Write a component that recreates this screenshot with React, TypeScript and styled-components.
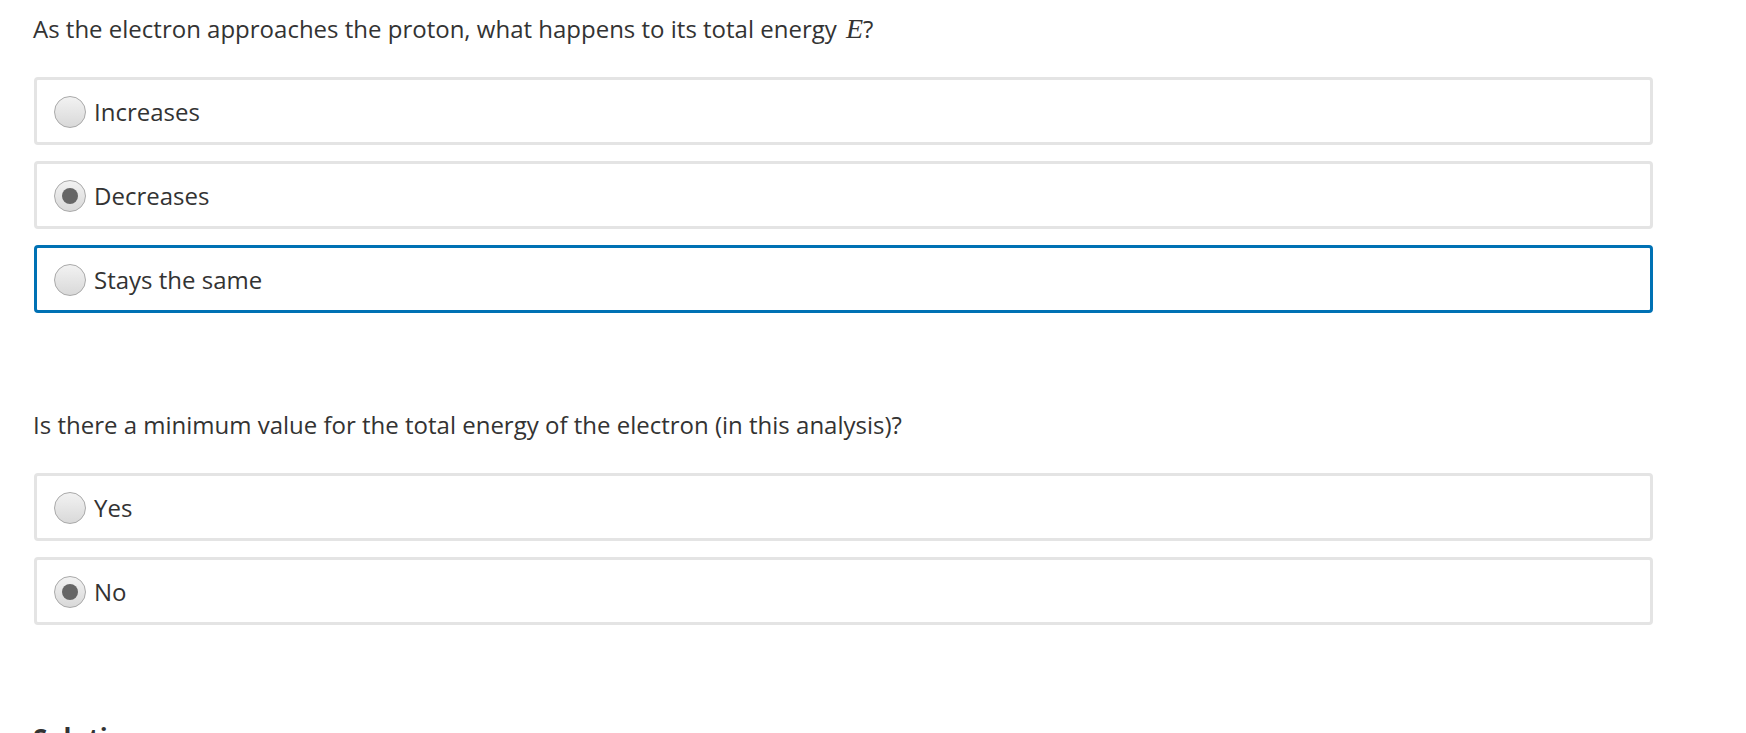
import React from "react";
import styled, { createGlobalStyle } from "styled-components";

const Global = createGlobalStyle`
  html, body { margin: 0; padding: 0; background: #fff; }
  body { font-family: "Open Sans", "Noto Sans", sans-serif; color: #333; }
`;

const Page = styled.div`
  padding: 12px 0 0 34px;
  width: 1653px;
  height: 733px;
  overflow: hidden;
  box-sizing: border-box;
`;

const Question = styled.p<{ $top: number }>`
  margin: ${(p) => p.$top}px 0 0 -1px;
  font-size: 24px;
  line-height: 34px;
  color: #333;
`;

const Math = styled.span`
  font-family: "Liberation Serif", "DejaVu Serif", serif;
  font-style: italic;
  font-size: 28px;
  margin-left: 3px;
`;

const Options = styled.div`
  margin-top: 31px;
  display: flex;
  flex-direction: column;
  gap: 16px;
`;

const Option = styled.label<{ $focused?: boolean }>`
  box-sizing: border-box;
  height: 68px;
  border: 3px solid ${(p) => (p.$focused ? "#0071b4" : "#e4e4e4")};
  border-radius: 4px;
  display: flex;
  align-items: center;
  padding: 0 0 0 17px;
  gap: 8px;
  font-size: 24px;
  color: #333;
`;

const Radio = styled.span<{ $checked?: boolean }>`
  box-sizing: border-box;
  width: 32px;
  height: 32px;
  border-radius: 50%;
  border: 1px solid #a9a9a9;
  background: linear-gradient(#f2f2f2, #d9d9d9);
  display: flex;
  align-items: center;
  justify-content: center;
  margin-top: 2px;
  &::after {
    content: "";
    display: ${(p) => (p.$checked ? "block" : "none")};
    width: 16px;
    height: 16px;
    border-radius: 50%;
    background: #666;
  }
`;

const Heading = styled.h3`
  margin: 95px 0 0 -1px;
  font-size: 26px;
  line-height: 36px;
  font-weight: 700;
  color: #333;
`;

type Opt = { label: string; checked?: boolean; focused?: boolean };

const q1: Opt[] = [
  { label: "Increases" },
  { label: "Decreases", checked: true },
  { label: "Stays the same", focused: true },
];
const q2: Opt[] = [{ label: "Yes" }, { label: "No", checked: true }];

const OptionList = ({ items }: { items: Opt[] }) => (
  <Options>
    {items.map((o) => (
      <Option key={o.label} $focused={o.focused}>
        <Radio $checked={o.checked} />
        {o.label}
      </Option>
    ))}
  </Options>
);

export default function App() {
  return (
    <>
      <Global />
      <Page>
        <Question $top={0}>
          As the electron approaches the proton, what happens to its total energy <Math>E</Math>?
        </Question>
        <OptionList items={q1} />
        <Question $top={95}>
          Is there a minimum value for the total energy of the electron (in this analysis)?
        </Question>
        <OptionList items={q2} />
        <Heading>Solution:</Heading>
      </Page>
    </>
  );
}
